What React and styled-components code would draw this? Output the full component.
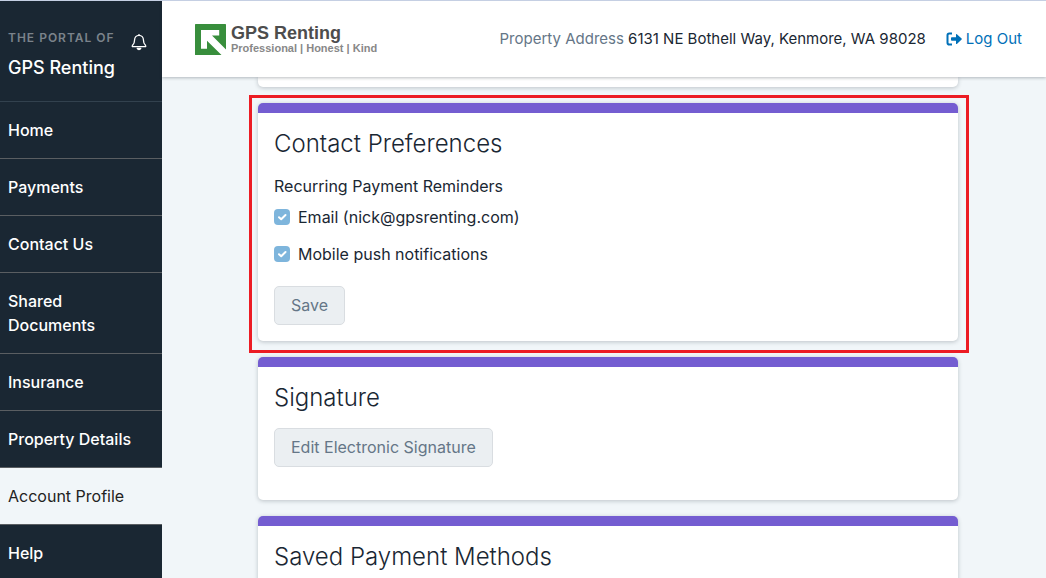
import React from 'react';
import styled, { createGlobalStyle, css } from 'styled-components';

const GlobalStyle = createGlobalStyle`
  *, *::before, *::after { box-sizing: border-box; }
  body {
    margin: 0;
    background: #f1f6f9;
    color: #1a2733;
    font-family: Inter, "Liberation Sans", sans-serif;
    font-size: 16px;
    line-height: 24px;
    font-weight: 400;
  }
`;

const Page = styled.div`
  display: flex;
  height: 100vh;
  overflow: hidden;
  border-top: 1px solid #c5cfe3;
`;

const Sidebar = styled.aside`
  flex: 0 0 162px;
  background: #1a2733;
  color: #fff;
  overflow: hidden;
`;

const Brand = styled.div`
  display: flex;
  justify-content: space-between;
  align-items: flex-start;
  height: 100px;
  padding: 25px 15px 0 8px;
`;

const BrandLabel = styled.div`
  color: #7b838b;
  font-size: 12px;
  font-weight: 600;
  letter-spacing: 1px;
  white-space: nowrap;
`;

const BrandName = styled.div`
  margin-top: 4px;
  font-size: 18px;
  line-height: 28px;
  font-weight: 500;
  white-space: nowrap;
`;

const BellButton = styled.button`
  display: flex;
  margin-top: 7px;
  padding: 0;
  border: 0;
  background: none;
  color: #fff;
  cursor: pointer;
`;

const NavLink = styled.a`
  display: block;
  padding: 16px 48px 16px 8px;
  border-top: 1px solid ${(p) => (p.$first ? '#32414e' : '#5a5e62')};
  color: #fff;
  font-weight: 500;
  text-decoration: none;
  ${(p) =>
    p.$wide &&
    css`
      padding-right: 8px;
    `}
  ${(p) =>
    p.$active &&
    css`
      background: #f1f6f9;
      color: #222;
      font-weight: 400;
    `}
`;

const Main = styled.div`
  flex: 1;
  min-width: 0;
  display: flex;
  flex-direction: column;
`;

const Header = styled.header`
  z-index: 1;
  flex: none;
  display: flex;
  align-items: center;
  justify-content: space-between;
  height: 76px;
  padding: 0 24px 0 33px;
  background: #fff;
  box-shadow: 0 1px 3px rgba(27, 39, 51, 0.3);
`;

const Logo = styled.a`
  display: flex;
  align-items: center;
  gap: 5px;
  color: #4d4d4d;
  font-family: "Liberation Sans", Arial, sans-serif;
  text-decoration: none;
`;

const LogoName = styled.div`
  font-size: 18px;
  line-height: 18px;
  font-weight: 700;
`;

const LogoTagline = styled.div`
  color: #888;
  font-size: 11px;
  line-height: 12px;
  font-weight: 700;
`;

const HeaderInfo = styled.div`
  display: flex;
  gap: 20px;
  font-size: 15px;
  white-space: nowrap;
`;

const Muted = styled.span`
  color: #657687;
`;

const LogoutLink = styled.a`
  display: flex;
  align-items: center;
  gap: 4px;
  color: #0070b8;
  text-decoration: none;
`;

const Content = styled.main`
  display: flex;
  flex-direction: column;
  align-items: center;
  gap: 16px;
  padding-left: 8px;
`;

const Card = styled.section`
  position: relative;
  flex: none;
  width: 100%;
  max-width: 700px;
  padding: 16px 16px ${(p) => p.$bottom || 16}px;
  border-top: 10px solid #745dd1;
  border-radius: 5px;
  background: #fff;
  box-shadow: 0 1px 4px rgba(27, 39, 51, 0.25);
`;

const CardEnd = styled.div`
  width: 100%;
  max-width: 700px;
  height: 10px;
  border-radius: 0 0 5px 5px;
  background: #fff;
  box-shadow: 0 1px 4px rgba(27, 39, 51, 0.25);
`;

const Highlight = styled.div`
  position: absolute;
  inset: -18px -11px -12px -9px;
  border: 3px solid #ec1c24;
  pointer-events: none;
`;

const Title = styled.h2`
  margin: 0 0 16px;
  font-size: 24px;
  line-height: 29px;
  font-weight: 300;
`;

const Fieldset = styled.fieldset`
  display: grid;
  gap: 13px;
  margin: 0 0 20px;
  padding: 0;
  border: 0;
`;

const Legend = styled.legend`
  margin-bottom: 7px;
  padding: 0;
`;

const CheckLabel = styled.label`
  display: flex;
  align-items: center;
  gap: 8px;
`;

const Checkbox = styled.input`
  appearance: none;
  width: 16px;
  height: 16px;
  margin: 0;
  border-radius: 4px;
  background: #7eb5dc;
  &:checked {
    background: #7eb5dc
      url("data:image/svg+xml,%3Csvg xmlns='http://www.w3.org/2000/svg' viewBox='0 0 16 16'%3E%3Cpath d='M5 8.200l2.200 2 4.300-4.200' fill='none' stroke='white' stroke-width='2' stroke-linecap='round' stroke-linejoin='round'/%3E%3C/svg%3E")
      center / 16px no-repeat;
  }
`;

const Button = styled.button`
  display: block;
  padding: 7px 16px;
  border: 1px solid #d9dde1;
  border-radius: 5px;
  background: #ebeff2;
  color: #657687;
  font: inherit;
  line-height: 23px;
`;

const NAV = [
  { label: 'Home' },
  { label: 'Payments' },
  { label: 'Contact Us' },
  { label: 'Shared Documents' },
  { label: 'Insurance' },
  { label: 'Property Details', wide: true },
  { label: 'Account Profile', wide: true, active: true },
  { label: 'Help' },
];

const BellIcon = () => (
  <svg width="16" height="18" viewBox="0 0 16 18" fill="none" stroke="currentColor" strokeWidth="1.3" strokeLinejoin="round" aria-hidden="true">
    <path d="M8 1v1.3M8 2.3c-2.7 0-4.4 2-4.4 4.5 0 3.6-1.1 4.8-2.2 5.8-.4.4-.2 1.1.4 1.1h12.4c.6 0 .8-.7.4-1.1-1.1-1-2.2-2.2-2.2-5.8 0-2.500-1.700-4.500-4.400-4.500z" />
    <path d="M6.200 15.300c.3.700 1 1.200 1.800 1.200s1.500-.5 1.800-1.200z" fill="currentColor" />
  </svg>
);

const LogoMark = () => (
  <svg width="31" height="31" viewBox="0 0 31 31" aria-hidden="true">
    <rect width="31" height="31" rx="0.6" fill="#388e3c" />
    <path d="M6 6H24.200V11.500H17L31 25.500V31H26.500L12 16.800V24.700H6Z" fill="#fff" />
  </svg>
);

const LogoutIcon = () => (
  <svg width="16" height="16" viewBox="0 0 16 16" aria-hidden="true">
    <path d="M6 2.500H3.300A1.800 1.800 0 0 0 1.500 4.300v7.400a1.800 1.800 0 0 0 1.800 1.800H6" fill="none" stroke="currentColor" strokeWidth="2" />
    <path d="M10 3.600v2.700H5.800a.8.800 0 0 0-.8.800v1.900c0 .4.400.8.800.8H10v2.700c0 .5.600.7.900.4L15.600 8.400a.5.500 0 0 0 0-.8L10.900 3.200c-.3-.3-.9-.1-.9.400z" fill="currentColor" />
  </svg>
);

export default function App() {
  return (
    <>
      <GlobalStyle />
      <Page>
        <Sidebar>
          <Brand>
            <div>
              <BrandLabel>THE PORTAL OF</BrandLabel>
              <BrandName>GPS Renting</BrandName>
            </div>
            <BellButton type="button" aria-label="Notifications">
              <BellIcon />
            </BellButton>
          </Brand>
          <nav>
            {NAV.map((item, i) => (
              <NavLink key={item.label} href="#" $first={i === 0} $wide={item.wide} $active={item.active}>
                {item.label}
              </NavLink>
            ))}
          </nav>
        </Sidebar>
        <Main>
          <Header>
            <Logo href="#">
              <LogoMark />
              <div>
                <LogoName>GPS Renting</LogoName>
                <LogoTagline>Professional | Honest | Kind</LogoTagline>
              </div>
            </Logo>
            <HeaderInfo>
              <div>
                <Muted>Property Address</Muted> 6131 NE Bothell Way, Kenmore, WA 98028
              </div>
              <LogoutLink href="#">
                <LogoutIcon />
                Log Out
              </LogoutLink>
            </HeaderInfo>
          </Header>
          <Content>
            <CardEnd />
            <Card>
              <Highlight />
              <Title>Contact Preferences</Title>
              <form onSubmit={(e) => e.preventDefault()}>
                <Fieldset>
                  <Legend>Recurring Payment Reminders</Legend>
                  <CheckLabel>
                    <Checkbox type="checkbox" defaultChecked />
                    Email (nick@gpsrenting.com)
                  </CheckLabel>
                  <CheckLabel>
                    <Checkbox type="checkbox" defaultChecked />
                    Mobile push notifications
                  </CheckLabel>
                </Fieldset>
                <Button type="submit">Save</Button>
              </form>
            </Card>
            <Card $bottom={33}>
              <Title>Signature</Title>
              <Button type="button">Edit Electronic Signature</Button>
            </Card>
            <Card $bottom={80}>
              <Title>Saved Payment Methods</Title>
            </Card>
          </Content>
        </Main>
      </Page>
    </>
  );
}
